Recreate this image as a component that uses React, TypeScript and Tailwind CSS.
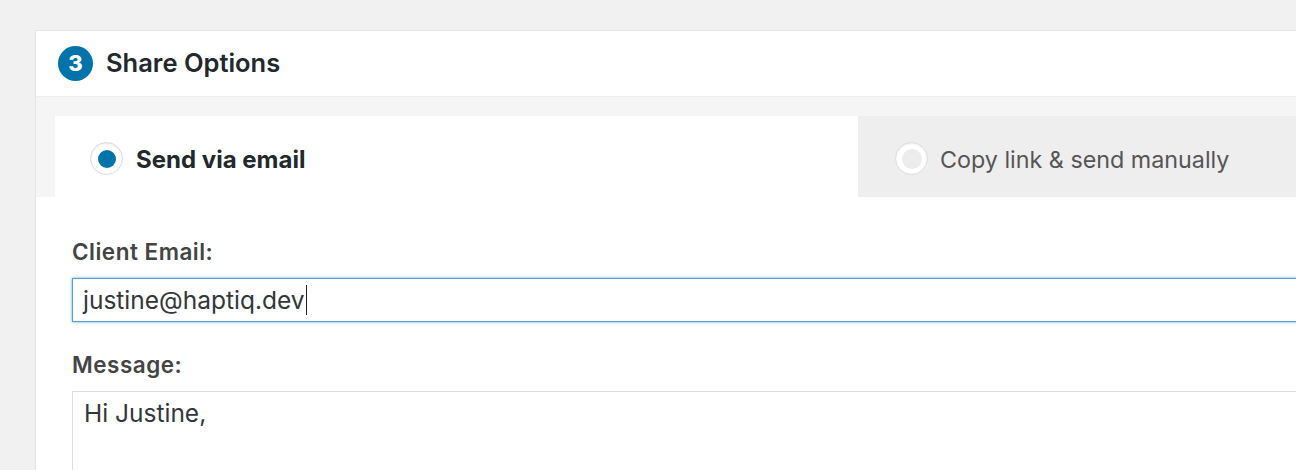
import React from "react";

function Radio({ checked }: { checked?: boolean }) {
  return (
    <span className="flex items-center justify-center w-[33px] h-[33px] rounded-full bg-white border border-[#dcdcde] shadow-[inset_0_1px_2px_rgba(0,0,0,0.08)]">
      {checked ? (
        <span className="w-[18px] h-[18px] rounded-full bg-[#0073aa]" />
      ) : (
        <span className="w-[20px] h-[20px] rounded-full bg-[#ececec]" />
      )}
    </span>
  );
}

export default function App() {
  return (
    <div
      className="h-[470px] overflow-hidden bg-[#f1f1f1] pt-[30px] pl-[35px]"
      style={{ fontFamily: "Inter, 'Noto Sans', sans-serif" }}
    >
      <div className="w-[1300px] bg-white border border-[#e5e5e5] min-h-[500px]">
        {/* header */}
        <div className="h-[66px] flex items-center pl-[22px] gap-[13px] border-b border-[#eeeeee]">
          <span className="flex items-center justify-center w-[35px] h-[35px] rounded-full bg-[#0073aa] text-white text-[22px] font-extrabold">
            3
          </span>
          <h2 className="text-[25.5px] font-semibold text-[#23282d]">Share Options</h2>
        </div>

        {/* tabs */}
        <div className="flex bg-[#f5f5f5] pt-[19px] pl-[19px]">
          <div className="w-[803px] h-[81px] bg-white flex items-center pl-[35px] pt-[4px] gap-[13px]">
            <Radio checked />
            <span className="text-[24px] font-bold text-[#23282d] pt-[3px]">Send via email</span>
          </div>
          <div className="flex-1 h-[81px] bg-[#eeeeee] flex items-center pl-[37px] pt-[4px] gap-[12px]">
            <Radio />
            <span className="text-[23.3px] text-[#555] pt-[3px]">Copy link &amp; send manually</span>
          </div>
        </div>

        {/* content */}
        <div className="pl-[36px] pt-[41px]">
          <label className="block text-[22.5px] leading-[28px] font-semibold tracking-[0.5px] text-[#444]">Client Email:</label>
          <div className="mt-[12px] h-[44px] border border-[#5b9dd9] shadow-[0_0_3px_rgba(30,140,190,0.7)] flex items-center pl-[10px] text-[24.5px] text-[#32373c]">
            justine@haptiq.dev
            <span className="inline-block w-px h-[30px] bg-[#222] ml-px" />
          </div>

          <label className="block mt-[29px] text-[22.5px] leading-[28px] font-semibold tracking-[0.5px] text-[#444]">Message:</label>
          <div className="mt-[12px] h-[120px] border border-[#dddddd] pl-[11px] pt-[6px] leading-[30px] text-[24.5px] text-[#32373c]">
            Hi Justine,
          </div>
        </div>
      </div>
    </div>
  );
}
